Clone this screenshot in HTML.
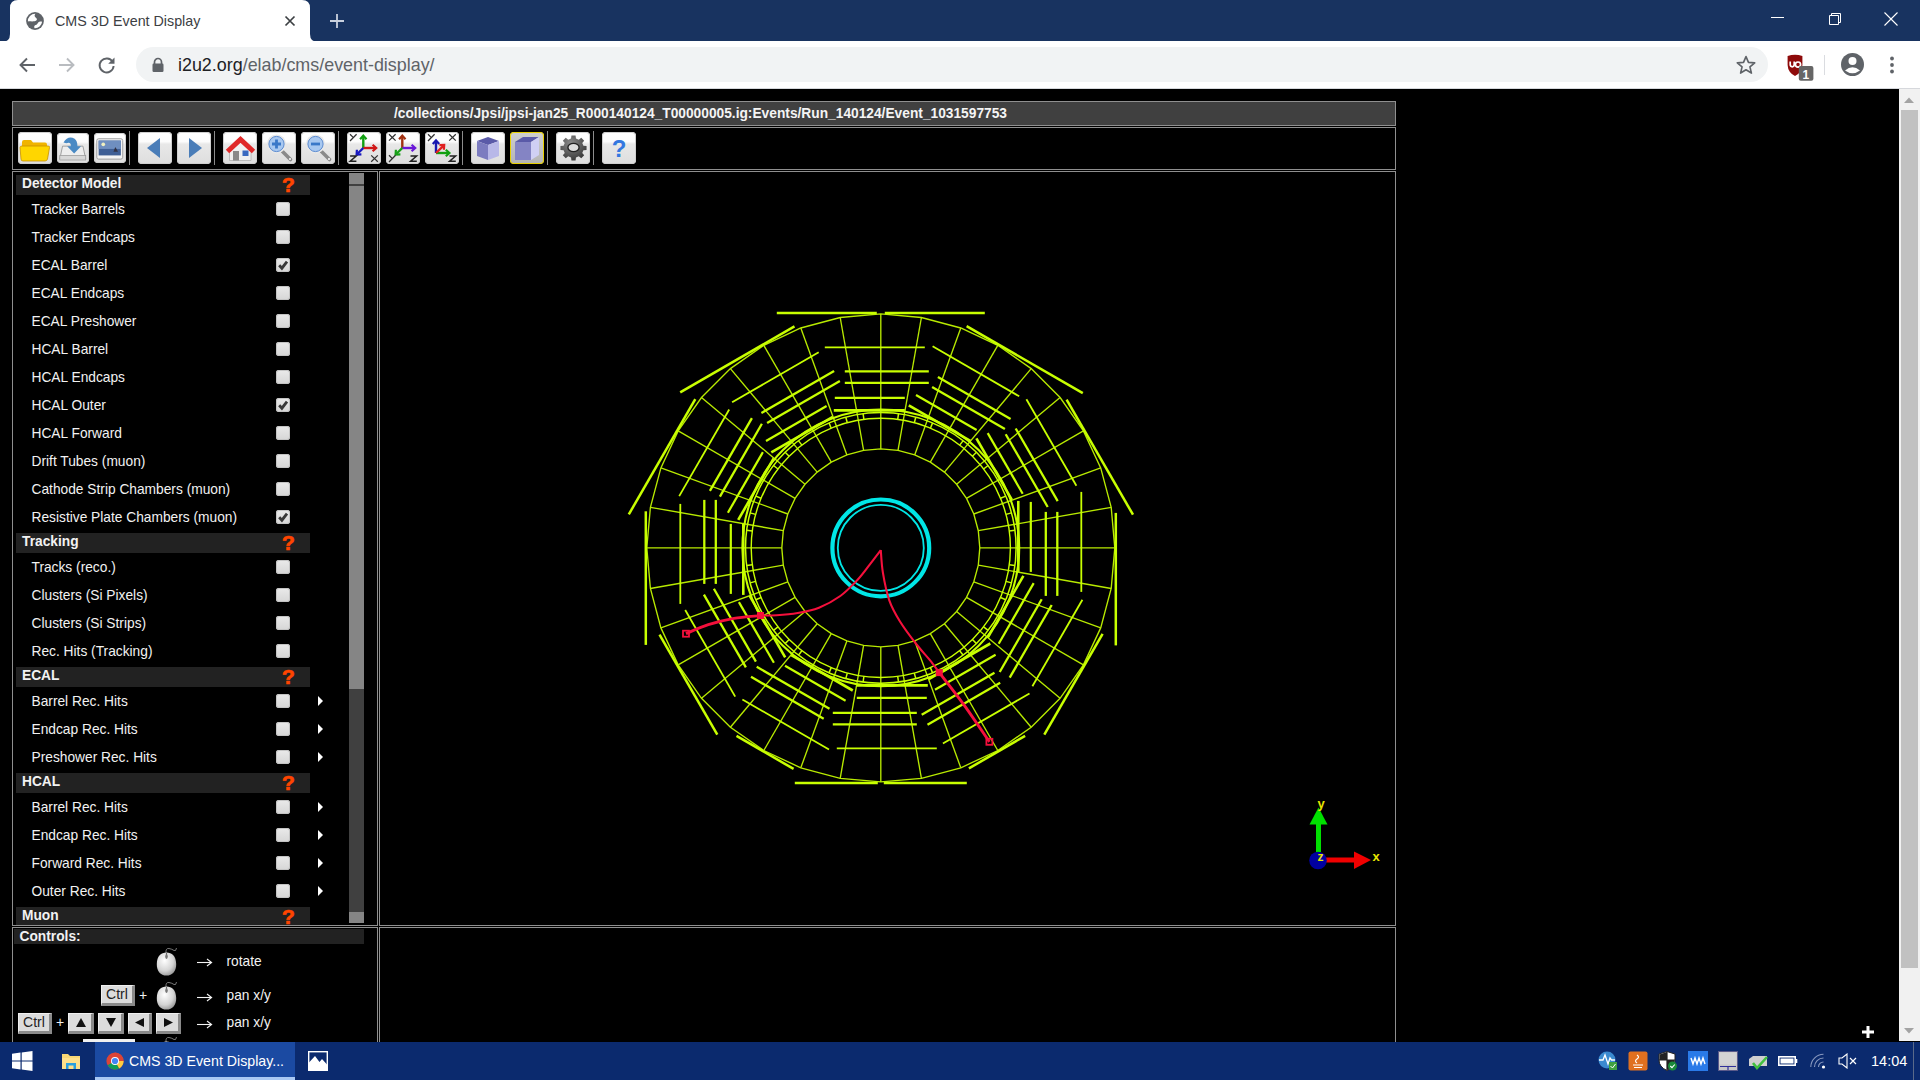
<!DOCTYPE html>
<html><head><meta charset="utf-8"><title>CMS 3D Event Display</title>
<style>
*{box-sizing:border-box}
body{margin:0;width:1920px;height:1080px;overflow:hidden;position:relative;background:#000;font-family:'Liberation Sans', sans-serif}
.a{position:absolute}
.btn{position:absolute;top:132px;width:34px;height:32px;border-radius:4px;background:linear-gradient(#ffffff 0%,#fcfcfc 30%,#e8e8e8 38%,#dedede 100%);box-shadow:inset 0 0 0 1px #cfcfcf}
.btn svg{position:absolute;left:0;top:0}
.sep{position:absolute;top:131px;width:1px;height:34px;background:#8c8c8c}
.hdr{position:absolute;left:16px;width:294px;height:20px;background:#222;color:#f2f2f2;font-weight:bold;font-size:13.75px;line-height:18px;padding-left:6px}
.hq{position:absolute;left:266px;top:-1px;text-align:left;color:#ff4500;font-weight:bold;font-size:21px;line-height:21px;-webkit-text-stroke:0.7px #ff4500}
.row{position:absolute;left:16px;width:330px;height:28px;color:#f2f2f2;font-size:13.75px;line-height:28px;padding-left:15.5px;padding-top:1px}
.cb{position:absolute;left:260px;top:7px;width:14px;height:14px;border-radius:3px;background:linear-gradient(#eaeaea,#d6d6d6);box-shadow:inset 0 0 0 1px #c4c4c4}
.tri{position:absolute;left:301.6px;top:9px;width:0;height:0;border-left:5.5px solid #fff;border-top:5px solid transparent;border-bottom:5px solid transparent}
.box{position:absolute;border:1px solid #8f8f8f}
.key{position:absolute;background:#dcdcdc;border-top:1px solid #f0f0f0;border-left:1px solid #f0f0f0;border-right:3px solid #8a8a8a;border-bottom:3px solid #8a8a8a;color:#222;font-size:14px;text-align:center}
</style></head><body>

<div class="a" style="left:0;top:0;width:1920px;height:41px;background:#183360"></div>
<svg class="a" style="left:0;top:0" width="330" height="42">
<path d="M2,42 Q10,42 10,34 L10,8 Q10,0 18,0 L302,0 Q310,0 310,8 L310,34 Q310,42 318,42 Z" fill="#ffffff"/>
</svg>
<svg class="a" style="left:26px;top:12px" width="18" height="18" viewBox="0 0 18 18">
<circle cx="9" cy="9" r="8.9" fill="#5f6368"/>
<path d="M1.9,9.4 A7.2,7.2 0 0 1 9.4,1.8 C8.4,3 8.2,4.6 9.6,5.4 C11,6.2 11.4,7.6 10.2,8.6 C8.6,9.8 5,9.2 1.9,9.4 Z" fill="#fff"/>
<path d="M16.1,9.8 A7.2,7.2 0 0 1 8.6,16.2 C7.8,15 8.2,13.6 9.6,13.1 C11,12.6 11.6,11.4 12.2,10.4 C13.2,9.2 14.8,9.2 16.1,9.8 Z" fill="#fff"/>
</svg>
<div class="a" style="left:55px;top:11px;font-size:14.3px;color:#3c4043;line-height:20px;white-space:nowrap">CMS 3D Event Display</div>
<svg class="a" style="left:283px;top:14px" width="14" height="14" viewBox="0 0 14 14"><path d="M2.5,2.5 L11.5,11.5 M11.5,2.5 L2.5,11.5" stroke="#3c4043" stroke-width="1.7"/></svg>
<svg class="a" style="left:329px;top:13px" width="16" height="16" viewBox="0 0 16 16"><path d="M8,1 V15 M1,8 H15" stroke="#c9d1de" stroke-width="1.8"/></svg>
<div class="a" style="left:1771px;top:17px;width:13px;height:1px;background:#fff"></div>
<svg class="a" style="left:1826px;top:11px" width="16" height="16" viewBox="0 0 16 16"><path d="M3.5,4.5 H12.5 V13.5 H3.5 Z M5.5,4.5 V2.5 H14.5 V11.5 H12.5" fill="none" stroke="#fff" stroke-width="1"/></svg>
<svg class="a" style="left:1883px;top:11px" width="16" height="16" viewBox="0 0 16 16"><path d="M1.5,1.5 L14.5,14.5 M14.5,1.5 L1.5,14.5" stroke="#fff" stroke-width="1.1"/></svg>

<div class="a" style="left:0;top:41px;width:1920px;height:47px;background:#fff"></div>
<div class="a" style="left:0;top:88px;width:1920px;height:1px;background:#d6d8dc"></div>
<svg class="a" style="left:17px;top:55px" width="20" height="20" viewBox="0 0 20 20"><path d="M18,10 H4 M10,3.5 L3.5,10 L10,16.5" fill="none" stroke="#5f6368" stroke-width="1.9"/></svg>
<svg class="a" style="left:57px;top:55px" width="20" height="20" viewBox="0 0 20 20"><path d="M2,10 H16 M10,3.5 L16.5,10 L10,16.5" fill="none" stroke="#b9bcc0" stroke-width="1.9"/></svg>
<svg class="a" style="left:97px;top:55px" width="20" height="20" viewBox="0 0 20 20"><path d="M15.6,6.8 A7,7 0 1 0 16.6,11" fill="none" stroke="#5f6368" stroke-width="1.9"/><path d="M17.5,2.5 V8.8 H11.2 Z" fill="#5f6368"/></svg>
<div class="a" style="left:136px;top:47px;width:1632px;height:35px;border-radius:17.5px;background:#f1f3f4"></div>
<svg class="a" style="left:151px;top:57px" width="14" height="16" viewBox="0 0 14 16"><path d="M3.5,7 V5 A3.5,3.5 0 0 1 10.5,5 V7" fill="none" stroke="#5f6368" stroke-width="1.7"/><rect x="1.5" y="6.5" width="11" height="8.5" rx="1.2" fill="#5f6368"/></svg>
<div class="a" style="left:178px;top:54px;font-size:17.9px;line-height:22px;color:#5f6368;white-space:nowrap"><span style="color:#202124">i2u2.org</span>/elab/cms/event-display/</div>
<svg class="a" style="left:1735px;top:54px" width="22" height="22" viewBox="0 0 24 24"><path d="M12,2.8 L14.7,9.2 L21.5,9.7 L16.3,14.1 L17.9,20.8 L12,17.2 L6.1,20.8 L7.7,14.1 L2.5,9.7 L9.3,9.2 Z" fill="none" stroke="#5f6368" stroke-width="1.8" stroke-linejoin="round"/></svg>
<svg class="a" style="left:1786px;top:53px" width="30" height="30" viewBox="0 0 30 30"><path d="M1.6,3 Q9,0.5 16.4,3 V12 Q16,19.5 9,23 Q2,19.5 1.6,12 Z" fill="#8e0a0a"/><path d="M4.2,8.4 V11.6 Q4.2,13.8 6.2,13.8 Q8.2,13.8 8.2,11.6 V8.4" fill="none" stroke="#fff" stroke-width="1.7"/><circle cx="12" cy="11.6" r="2.6" fill="none" stroke="#fff" stroke-width="1.7"/><rect x="12.8" y="13" width="14.6" height="14.8" rx="2" fill="#666"/><text x="16.6" y="25.6" font-family="Liberation Sans" font-weight="bold" font-size="12" fill="#fff">1</text></svg>
<div class="a" style="left:1824px;top:55px;width:1px;height:20px;background:#dadce0"></div>
<svg class="a" style="left:1840px;top:52px" width="25" height="25" viewBox="0 0 25 25"><circle cx="12.5" cy="12.5" r="11.5" fill="#5f6368"/><circle cx="12.5" cy="9" r="4" fill="#fff"/><path d="M5,18.5 Q12.5,12 20,18.5 Q12.5,24 5,18.5 Z" fill="#fff"/></svg>
<svg class="a" style="left:1888px;top:55px" width="8" height="20" viewBox="0 0 8 20"><circle cx="4" cy="3.5" r="1.9" fill="#5f6368"/><circle cx="4" cy="10" r="1.9" fill="#5f6368"/><circle cx="4" cy="16.5" r="1.9" fill="#5f6368"/></svg>

<div class="a" style="left:1899px;top:89px;width:21px;height:952px;background:#f1f1f1"></div>
<svg class="a" style="left:1903px;top:96px" width="12" height="8"><path d="M1,7 L6,1.5 L11,7 Z" fill="#a3a3a3"/></svg>
<div class="a" style="left:1901px;top:110px;width:17px;height:858px;background:#c1c1c1"></div>
<svg class="a" style="left:1903px;top:1027px" width="12" height="8"><path d="M1,1 L6,6.5 L11,1 Z" fill="#a3a3a3"/></svg>
<svg class="a" style="left:1861px;top:1025px" width="14" height="14"><path d="M7,1 V13 M1,7 H13" stroke="#fff" stroke-width="3"/></svg>

<div class="box" style="left:12px;top:101px;width:1384px;height:25px;background:#404040"></div>
<div class="a" style="left:12px;top:101px;width:1384px;height:25px;line-height:25px;text-align:center;color:#f4f4f4;font-weight:bold;font-size:13.75px;white-space:nowrap;padding-right:7px">/collections/Jpsi/jpsi-jan25_R000140124_T00000005.ig:Events/Run_140124/Event_1031597753</div>
<div class="box" style="left:12px;top:127px;width:1384px;height:43px"></div>
<div class="box" style="left:12px;top:171px;width:366px;height:755px"></div>
<div class="box" style="left:379px;top:171px;width:1017px;height:755px"></div>
<div class="box" style="left:12px;top:927px;width:366px;height:200px"></div>
<div class="box" style="left:379px;top:927px;width:1017px;height:200px"></div>

<div class="btn" style="left:18px"><svg width="34" height="32" viewBox="0 0 34 32"><path d="M4,10 Q4,8 6,8 H13 L15,10.5 H27 Q29,10.5 29,12.5 V16 H4 Z" fill="#f0b400"/><path d="M3,27 L2,15.5 Q2,14 4,14 H30 Q32,14 31.5,15.5 L29.5,27 Q29,29 27,29 H5 Q3,29 3,27 Z" fill="#ffd600" stroke="#c89000" stroke-width="0.8"/></svg></div>
<div class="btn" style="left:57px;top:133px;width:31.5px;height:30px"><svg width="31.5" height="30" viewBox="0 0 34 32"><path d="M6,14 H28 L31,28 H3 Z" fill="#eeeeee" stroke="#9a9a9a" stroke-width="1"/><rect x="3" y="24" width="28" height="5" fill="#d8d8d8" stroke="#9a9a9a" stroke-width="0.8"/><path d="M7,10 Q12,2 19,6 Q22,8 22,14 H26 L18.5,22 L11,14 H15 Q15,9 10,11 Z" fill="#4a8ac4"/></svg></div>
<div class="btn" style="left:94px;top:133px;width:31.5px;height:30px"><svg width="31.5" height="30" viewBox="0 0 34 32"><rect x="3" y="6" width="28" height="22" rx="2" fill="#f4f4f4" stroke="#9a9a9a"/><rect x="5" y="8" width="24" height="16" fill="#3f5f95"/><rect x="5" y="8" width="24" height="9" fill="#6f8fc0"/><circle cx="10" cy="12" r="2" fill="#f0f0c0"/><path d="M21,20 L23,15 L26,20 Z" fill="#334"/></svg></div>
<div class="btn" style="left:138px"><svg width="34" height="32" viewBox="0 0 34 32"><path d="M9,16 L22,6 V26 Z" fill="#4a7db8"/></svg></div>
<div class="btn" style="left:177px"><svg width="34" height="32" viewBox="0 0 34 32"><path d="M25,16 L12,6 V26 Z" fill="#4a7db8"/></svg></div>
<div class="btn" style="left:223px"><svg width="34" height="32" viewBox="0 0 34 32"><path d="M6.5,17 V28.5 H28 V17 L17.5,8 Z" fill="#f0f0f0" stroke="#b0b0b0" stroke-width="0.8"/><rect x="10" y="19" width="6" height="9.5" fill="#8a8a8a"/><rect x="19.5" y="18.5" width="6" height="5.5" fill="#3a6ac0"/><path d="M4.5,19.5 L17.5,7.5 L30.5,19.5" fill="none" stroke="#e02828" stroke-width="5" stroke-linejoin="miter"/></svg></div>
<div class="btn" style="left:262px"><svg width="34" height="32" viewBox="0 0 34 32"><path d="M20,19 L28.5,27.5" stroke="#8a8a8a" stroke-width="3.6" stroke-linecap="round"/><circle cx="28" cy="27" r="1" fill="#fff"/><circle cx="14.5" cy="12" r="9.6" fill="#e8e8e8"/><circle cx="14.5" cy="12" r="7.6" fill="#a8c8f0" stroke="#5a8ad0" stroke-width="1"/><path d="M14.5,7.5 V16.5 M10,12 H19" stroke="#3a78c8" stroke-width="2.8"/></svg></div>
<div class="btn" style="left:301px"><svg width="34" height="32" viewBox="0 0 34 32"><path d="M20,19 L28.5,27.5" stroke="#8a8a8a" stroke-width="3.6" stroke-linecap="round"/><circle cx="28" cy="27" r="1" fill="#fff"/><circle cx="14.5" cy="12" r="9.6" fill="#e8e8e8"/><circle cx="14.5" cy="12" r="7.6" fill="#a8c8f0" stroke="#5a8ad0" stroke-width="1"/><path d="M10,12 H19" stroke="#3a78c8" stroke-width="2.8"/></svg></div>
<div class="btn" style="left:347px"><svg width="34" height="32" viewBox="0 0 34 32"><path d="M16.3,16.0 L16.3,4.4" stroke="#10a010" stroke-width="2.4" fill="none"/><path d="M19.5,7.2 L16.3,3.6 L13.1,7.2" stroke="#10a010" stroke-width="2.2" fill="none" stroke-linejoin="miter"/><path d="M16.3,16.0 L28.4,16.0" stroke="#d01818" stroke-width="2.4" fill="none"/><path d="M25.6,19.2 L29.2,16.0 L25.6,12.8" stroke="#d01818" stroke-width="2.2" fill="none" stroke-linejoin="miter"/><path d="M16.3,16.0 L10.2,22.0" stroke="#1818c0" stroke-width="2.4" fill="none"/><path d="M9.9,17.8 L9.6,22.6 L14.4,22.4" stroke="#1818c0" stroke-width="2.2" fill="none" stroke-linejoin="miter"/><path d="M3,2.2 L6.4,5.6 M9.6,2.2 L3,9.0" stroke="#303030" stroke-width="1.25" fill="none"/><path d="M3.0999999999999996,24.0 H9.2 L3.1999999999999997,29.2 H9.399999999999999" stroke="#202020" stroke-width="1.5" fill="none"/><path d="M24.2,23.4 L30.799999999999997,29.799999999999997 M30.799999999999997,23.4 L24.2,29.799999999999997" stroke="#303030" stroke-width="1.25" fill="none"/></svg></div>
<div class="btn" style="left:386px"><svg width="34" height="32" viewBox="0 0 34 32"><path d="M16.3,16.0 L16.3,4.4" stroke="#a03010" stroke-width="2.4" fill="none"/><path d="M19.5,7.2 L16.3,3.6 L13.1,7.2" stroke="#a03010" stroke-width="2.2" fill="none" stroke-linejoin="miter"/><path d="M16.3,16.0 L28.4,16.0" stroke="#6a18d8" stroke-width="2.4" fill="none"/><path d="M25.6,19.2 L29.2,16.0 L25.6,12.8" stroke="#6a18d8" stroke-width="2.2" fill="none" stroke-linejoin="miter"/><path d="M16.3,16.0 L10.2,22.0" stroke="#18a018" stroke-width="2.4" fill="none"/><path d="M9.9,17.8 L9.6,22.6 L14.4,22.4" stroke="#18a018" stroke-width="2.2" fill="none" stroke-linejoin="miter"/><path d="M3,2.2 L9.6,8.600000000000001 M9.6,2.2 L3,8.600000000000001" stroke="#303030" stroke-width="1.25" fill="none"/><path d="M3,23.2 L6.4,26.599999999999998 M9.6,23.2 L3,30.0" stroke="#303030" stroke-width="1.25" fill="none"/><path d="M24.5,24.0 H30.6 L24.599999999999998,29.2 H30.799999999999997" stroke="#202020" stroke-width="1.5" fill="none"/></svg></div>
<div class="btn" style="left:425px"><svg width="34" height="32" viewBox="0 0 34 32"><path d="M11.0,21.0 L11.0,9.2" stroke="#1818b0" stroke-width="2.4" fill="none"/><path d="M14.2,12.0 L11.0,8.4 L7.8,12.0" stroke="#1818b0" stroke-width="2.2" fill="none" stroke-linejoin="miter"/><path d="M11.0,21.0 L23.6,21.0" stroke="#10a010" stroke-width="2.4" fill="none"/><path d="M20.8,24.2 L24.4,21.0 L20.8,17.8" stroke="#10a010" stroke-width="2.2" fill="none" stroke-linejoin="miter"/><path d="M11.0,21.0 L18.6,13.6" stroke="#e02020" stroke-width="2.4" fill="none"/><path d="M18.9,17.8 L19.2,13.0 L14.4,13.2" stroke="#e02020" stroke-width="2.2" fill="none" stroke-linejoin="miter"/><path d="M3,2.2 L6.4,5.6 M9.6,2.2 L3,9.0" stroke="#303030" stroke-width="1.25" fill="none"/><path d="M24.2,2.2 L30.799999999999997,8.600000000000001 M30.799999999999997,2.2 L24.2,8.600000000000001" stroke="#303030" stroke-width="1.25" fill="none"/><path d="M24.5,24.0 H30.6 L24.599999999999998,29.2 H30.799999999999997" stroke="#202020" stroke-width="1.5" fill="none"/></svg></div>
<div class="btn" style="left:471px"><svg width="34" height="32" viewBox="0 0 34 32"><path d="M6,9 L17,5 L28,9 L17,13 Z" fill="#5a5aa8"/><path d="M6,9 L17,13 V28 L6,24 Z" fill="#7c7cc0"/><path d="M17,13 L28,9 V24 L17,28 Z" fill="#b8b8e8"/></svg></div>
<div class="btn" style="left:510px;background:linear-gradient(#cfcfcf,#b4b4b4);box-shadow:inset 0 0 0 1px #e8d000"><svg width="34" height="32" viewBox="0 0 34 32"><path d="M5,10 L13,5 H29 L21,10 Z" fill="#5a5aa8"/><path d="M5,10 H21 V28 H5 Z" fill="#8484c4"/><path d="M21,10 L29,5 V23 L21,28 Z" fill="#d0d0f4"/></svg></div>
<div class="btn" style="left:556px"><svg width="34" height="32" viewBox="0 0 34 32"><g transform="translate(17.5,16) scale(1,0.95)"><defs><radialGradient id="gg" cx="0.4" cy="0.3" r="0.8"><stop offset="0" stop-color="#8a8a8a"/><stop offset="1" stop-color="#303030"/></radialGradient></defs><path d="M9.90,-2.47 L13.04,-2.06 L13.04,2.06 L9.90,2.47 L8.74,5.25 L10.68,7.76 L7.76,10.68 L5.25,8.74 L2.47,9.90 L2.06,13.04 L-2.06,13.04 L-2.47,9.90 L-5.25,8.74 L-7.76,10.68 L-10.68,7.76 L-8.74,5.25 L-9.90,2.47 L-13.04,2.06 L-13.04,-2.06 L-9.90,-2.47 L-8.74,-5.25 L-10.68,-7.76 L-7.76,-10.68 L-5.25,-8.74 L-2.47,-9.90 L-2.06,-13.04 L2.06,-13.04 L2.47,-9.90 L5.25,-8.74 L7.76,-10.68 L10.68,-7.76 L8.74,-5.25 Z" fill="url(#gg)"/><ellipse cx="0" cy="-0.5" rx="5.6" ry="4.4" fill="#dcdcdc" stroke="#222" stroke-width="1.4"/></g></svg></div>
<div class="btn" style="left:602px"><svg width="34" height="32" viewBox="0 0 34 32"><text x="17" y="25" text-anchor="middle" font-family="Liberation Sans" font-weight="bold" font-size="24" fill="#3478e0">?</text></svg></div>
<div class="sep" style="left:129px"></div>
<div class="sep" style="left:214px"></div>
<div class="sep" style="left:338px"></div>
<div class="sep" style="left:462px"></div>
<div class="sep" style="left:547px"></div>
<div class="sep" style="left:593px"></div>
<div class="a" style="left:13px;top:172px;width:364px;height:753px;overflow:hidden">
<div class="hdr" style="left:3px;top:3px">Detector Model<div class="hq">?</div></div>
<div class="row" style="left:3px;top:23px">Tracker Barrels<div class="cb"></div></div>
<div class="row" style="left:3px;top:51px">Tracker Endcaps<div class="cb"></div></div>
<div class="row" style="left:3px;top:79px">ECAL Barrel<div class="cb"><svg width="14" height="14" style="position:absolute;left:0;top:0"><path d="M3.2,7.2 L5.9,10.2 L11,3.6" fill="none" stroke="#383838" stroke-width="2.8"/></svg></div></div>
<div class="row" style="left:3px;top:107px">ECAL Endcaps<div class="cb"></div></div>
<div class="row" style="left:3px;top:135px">ECAL Preshower<div class="cb"></div></div>
<div class="row" style="left:3px;top:163px">HCAL Barrel<div class="cb"></div></div>
<div class="row" style="left:3px;top:191px">HCAL Endcaps<div class="cb"></div></div>
<div class="row" style="left:3px;top:219px">HCAL Outer<div class="cb"><svg width="14" height="14" style="position:absolute;left:0;top:0"><path d="M3.2,7.2 L5.9,10.2 L11,3.6" fill="none" stroke="#383838" stroke-width="2.8"/></svg></div></div>
<div class="row" style="left:3px;top:247px">HCAL Forward<div class="cb"></div></div>
<div class="row" style="left:3px;top:275px">Drift Tubes (muon)<div class="cb"></div></div>
<div class="row" style="left:3px;top:303px">Cathode Strip Chambers (muon)<div class="cb"></div></div>
<div class="row" style="left:3px;top:331px">Resistive Plate Chambers (muon)<div class="cb"><svg width="14" height="14" style="position:absolute;left:0;top:0"><path d="M3.2,7.2 L5.9,10.2 L11,3.6" fill="none" stroke="#383838" stroke-width="2.8"/></svg></div></div>
<div class="hdr" style="left:3px;top:361px">Tracking<div class="hq">?</div></div>
<div class="row" style="left:3px;top:381px">Tracks (reco.)<div class="cb"></div></div>
<div class="row" style="left:3px;top:409px">Clusters (Si Pixels)<div class="cb"></div></div>
<div class="row" style="left:3px;top:437px">Clusters (Si Strips)<div class="cb"></div></div>
<div class="row" style="left:3px;top:465px">Rec. Hits (Tracking)<div class="cb"></div></div>
<div class="hdr" style="left:3px;top:495px">ECAL<div class="hq">?</div></div>
<div class="row" style="left:3px;top:515px">Barrel Rec. Hits<div class="cb"></div><div class="tri"></div></div>
<div class="row" style="left:3px;top:543px">Endcap Rec. Hits<div class="cb"></div><div class="tri"></div></div>
<div class="row" style="left:3px;top:571px">Preshower Rec. Hits<div class="cb"></div><div class="tri"></div></div>
<div class="hdr" style="left:3px;top:601px">HCAL<div class="hq">?</div></div>
<div class="row" style="left:3px;top:621px">Barrel Rec. Hits<div class="cb"></div><div class="tri"></div></div>
<div class="row" style="left:3px;top:649px">Endcap Rec. Hits<div class="cb"></div><div class="tri"></div></div>
<div class="row" style="left:3px;top:677px">Forward Rec. Hits<div class="cb"></div><div class="tri"></div></div>
<div class="row" style="left:3px;top:705px">Outer Rec. Hits<div class="cb"></div><div class="tri"></div></div>
<div class="hdr" style="left:3px;top:735px">Muon<div class="hq">?</div></div>
</div>
<div class="a" style="left:349px;top:173px;width:15px;height:750px;background:#404040"></div>
<div class="a" style="left:349px;top:173px;width:15px;height:11px;background:#858585"></div>
<div class="a" style="left:349px;top:186px;width:15px;height:503px;background:#858585"></div>
<div class="a" style="left:349px;top:912px;width:15px;height:11px;background:#858585"></div>

<div class="a" style="left:14px;top:929px;width:350px;height:15px;background:#222"></div>
<div class="a" style="left:19.5px;top:927px;color:#f2f2f2;font-weight:bold;font-size:13.75px;line-height:19px">Controls:</div>

<svg width="0" height="0" style="position:absolute"><defs><radialGradient id="mg" cx="0.4" cy="0.35" r="0.75"><stop offset="0" stop-color="#ffffff"/><stop offset="0.6" stop-color="#d4d4d4"/><stop offset="1" stop-color="#8a8a8a"/></radialGradient></defs></svg>
<svg class="a" style="left:155px;top:947px" width="26" height="30" viewBox="0 0 26 30"><path d="M11,6 Q10.5,1 14,1.5 Q17,2 19,3.5 Q21,4.5 21.5,1" fill="none" stroke="#aaa" stroke-width="0.7"/><path d="M11.5,5.5 C6,5.5 2,9 1.8,17 C1.6,24 5.5,28.6 11.5,28.6 C17.5,28.6 21.4,24 21.2,17 C21,9 17,5.5 11.5,5.5 Z" fill="url(#mg)"/><path d="M11.5,6 V11.5" stroke="#666" stroke-width="1.1"/><ellipse cx="11.5" cy="9.5" rx="1.3" ry="2.2" fill="#777"/></svg>
<svg class="a" style="left:155px;top:981px" width="26" height="30" viewBox="0 0 26 30"><path d="M11,6 Q10.5,1 14,1.5 Q17,2 19,3.5 Q21,4.5 21.5,1" fill="none" stroke="#aaa" stroke-width="0.7"/><path d="M11.5,5.5 C6,5.5 2,9 1.8,17 C1.6,24 5.5,28.6 11.5,28.6 C17.5,28.6 21.4,24 21.2,17 C21,9 17,5.5 11.5,5.5 Z" fill="url(#mg)"/><path d="M11.5,6 V11.5" stroke="#666" stroke-width="1.1"/><ellipse cx="11.5" cy="9.5" rx="1.3" ry="2.2" fill="#777"/></svg>
<svg class="a" style="left:155px;top:1036px" width="26" height="30" viewBox="0 0 26 30"><path d="M11,6 Q10.5,1 14,1.5 Q17,2 19,3.5 Q21,4.5 21.5,1" fill="none" stroke="#aaa" stroke-width="0.7"/><path d="M11.5,5.5 C6,5.5 2,9 1.8,17 C1.6,24 5.5,28.6 11.5,28.6 C17.5,28.6 21.4,24 21.2,17 C21,9 17,5.5 11.5,5.5 Z" fill="url(#mg)"/><path d="M11.5,6 V11.5" stroke="#666" stroke-width="1.1"/><ellipse cx="11.5" cy="9.5" rx="1.3" ry="2.2" fill="#777"/></svg>
<svg class="a" style="left:196px;top:957px" width="18" height="10" viewBox="0 0 18 10"><path d="M1,5.5 H15.5" stroke="#f4f4f4" stroke-width="1.1"/><path d="M11,2 L15.6,5.5 L11,9" fill="none" stroke="#f4f4f4" stroke-width="1.1"/></svg>
<div class="a" style="left:226.5px;top:952px;color:#f2f2f2;font-size:13.75px;line-height:20px">rotate</div>
<div class="key" style="left:101px;top:985px;width:34px;height:21px;line-height:17px">Ctrl</div>
<div class="a" style="left:139px;top:985px;color:#f2f2f2;font-size:14px;line-height:20px">+</div>
<svg class="a" style="left:196px;top:992px" width="18" height="10" viewBox="0 0 18 10"><path d="M1,5.5 H15.5" stroke="#f4f4f4" stroke-width="1.1"/><path d="M11,2 L15.6,5.5 L11,9" fill="none" stroke="#f4f4f4" stroke-width="1.1"/></svg>
<div class="a" style="left:226.5px;top:986px;color:#f2f2f2;font-size:13.75px;line-height:20px">pan x/y</div>
<div class="key" style="left:18px;top:1013px;width:34px;height:21px;line-height:17px">Ctrl</div>
<div class="a" style="left:56px;top:1012px;color:#f2f2f2;font-size:14px;line-height:20px">+</div>
<div class="key" style="left:68px;top:1013px;width:26px;height:21px"><svg width="20" height="17" style="position:absolute;left:2px;top:0"><path d="M5,13 L10,4 L15,13 Z" fill="#111"/></svg></div>
<div class="key" style="left:98px;top:1013px;width:26px;height:21px"><svg width="20" height="17" style="position:absolute;left:2px;top:0"><path d="M5,4 L10,13 L15,4 Z" fill="#111"/></svg></div>
<div class="key" style="left:127.5px;top:1013px;width:24px;height:21px"><svg width="20" height="17" style="position:absolute;left:1px;top:0"><path d="M14,4 L5,8.5 L14,13 Z" fill="#111"/></svg></div>
<div class="key" style="left:156px;top:1013px;width:25px;height:21px"><svg width="20" height="17" style="position:absolute;left:2px;top:0"><path d="M5,4 L14,8.5 L5,13 Z" fill="#111"/></svg></div>
<svg class="a" style="left:196px;top:1019px" width="18" height="10" viewBox="0 0 18 10"><path d="M1,5.5 H15.5" stroke="#f4f4f4" stroke-width="1.1"/><path d="M11,2 L15.6,5.5 L11,9" fill="none" stroke="#f4f4f4" stroke-width="1.1"/></svg>
<div class="a" style="left:226.5px;top:1013px;color:#f2f2f2;font-size:13.75px;line-height:20px">pan x/y</div>
<div class="a" style="left:83px;top:1039px;width:52px;height:4px;background:#f0f0f0"></div>

<svg class="a" style="left:0;top:0" width="1920" height="1080" viewBox="0 0 1920 1080">
<line x1="979.8" y1="547.9" x2="1114.8" y2="547.9" stroke="#b8ea00" stroke-width="1.35"/>
<line x1="978.3" y1="530.7" x2="1111.2" y2="507.3" stroke="#b8ea00" stroke-width="1.35"/>
<line x1="973.8" y1="514.0" x2="1100.7" y2="467.9" stroke="#b8ea00" stroke-width="1.35"/>
<line x1="966.5" y1="498.4" x2="1083.4" y2="430.9" stroke="#b8ea00" stroke-width="1.35"/>
<line x1="956.6" y1="484.3" x2="1060.1" y2="397.5" stroke="#b8ea00" stroke-width="1.35"/>
<line x1="944.4" y1="472.1" x2="1031.2" y2="368.6" stroke="#b8ea00" stroke-width="1.35"/>
<line x1="930.3" y1="462.2" x2="997.8" y2="345.3" stroke="#b8ea00" stroke-width="1.35"/>
<line x1="914.7" y1="454.9" x2="960.8" y2="328.0" stroke="#b8ea00" stroke-width="1.35"/>
<line x1="898.0" y1="450.4" x2="921.4" y2="317.5" stroke="#b8ea00" stroke-width="1.35"/>
<line x1="880.8" y1="448.9" x2="880.8" y2="313.9" stroke="#b8ea00" stroke-width="1.35"/>
<line x1="863.6" y1="450.4" x2="840.2" y2="317.5" stroke="#b8ea00" stroke-width="1.35"/>
<line x1="846.9" y1="454.9" x2="800.8" y2="328.0" stroke="#b8ea00" stroke-width="1.35"/>
<line x1="831.3" y1="462.2" x2="763.8" y2="345.3" stroke="#b8ea00" stroke-width="1.35"/>
<line x1="817.2" y1="472.1" x2="730.4" y2="368.6" stroke="#b8ea00" stroke-width="1.35"/>
<line x1="805.0" y1="484.3" x2="701.5" y2="397.5" stroke="#b8ea00" stroke-width="1.35"/>
<line x1="795.1" y1="498.4" x2="678.2" y2="430.9" stroke="#b8ea00" stroke-width="1.35"/>
<line x1="787.8" y1="514.0" x2="660.9" y2="467.9" stroke="#b8ea00" stroke-width="1.35"/>
<line x1="783.3" y1="530.7" x2="650.4" y2="507.3" stroke="#b8ea00" stroke-width="1.35"/>
<line x1="781.8" y1="547.9" x2="646.8" y2="547.9" stroke="#b8ea00" stroke-width="1.35"/>
<line x1="783.3" y1="565.1" x2="650.4" y2="588.5" stroke="#b8ea00" stroke-width="1.35"/>
<line x1="787.8" y1="581.8" x2="660.9" y2="627.9" stroke="#b8ea00" stroke-width="1.35"/>
<line x1="795.1" y1="597.4" x2="678.2" y2="664.9" stroke="#b8ea00" stroke-width="1.35"/>
<line x1="805.0" y1="611.5" x2="701.5" y2="698.3" stroke="#b8ea00" stroke-width="1.35"/>
<line x1="817.2" y1="623.7" x2="730.4" y2="727.2" stroke="#b8ea00" stroke-width="1.35"/>
<line x1="831.3" y1="633.6" x2="763.8" y2="750.5" stroke="#b8ea00" stroke-width="1.35"/>
<line x1="846.9" y1="640.9" x2="800.8" y2="767.8" stroke="#b8ea00" stroke-width="1.35"/>
<line x1="863.6" y1="645.4" x2="840.2" y2="778.3" stroke="#b8ea00" stroke-width="1.35"/>
<line x1="880.8" y1="646.9" x2="880.8" y2="781.9" stroke="#b8ea00" stroke-width="1.35"/>
<line x1="898.0" y1="645.4" x2="921.4" y2="778.3" stroke="#b8ea00" stroke-width="1.35"/>
<line x1="914.7" y1="640.9" x2="960.8" y2="767.8" stroke="#b8ea00" stroke-width="1.35"/>
<line x1="930.3" y1="633.6" x2="997.8" y2="750.5" stroke="#b8ea00" stroke-width="1.35"/>
<line x1="944.4" y1="623.7" x2="1031.2" y2="727.2" stroke="#b8ea00" stroke-width="1.35"/>
<line x1="956.6" y1="611.5" x2="1060.1" y2="698.3" stroke="#b8ea00" stroke-width="1.35"/>
<line x1="966.5" y1="597.4" x2="1083.4" y2="664.9" stroke="#b8ea00" stroke-width="1.35"/>
<line x1="973.8" y1="581.8" x2="1100.7" y2="627.9" stroke="#b8ea00" stroke-width="1.35"/>
<line x1="978.3" y1="565.1" x2="1111.2" y2="588.5" stroke="#b8ea00" stroke-width="1.35"/>
<polygon points="979.8,547.9 978.3,530.7 973.8,514.0 966.5,498.4 956.6,484.3 944.4,472.1 930.3,462.2 914.7,454.9 898.0,450.4 880.8,448.9 863.6,450.4 846.9,454.9 831.3,462.2 817.2,472.1 805.0,484.3 795.1,498.4 787.8,514.0 783.3,530.7 781.8,547.9 783.3,565.1 787.8,581.8 795.1,597.4 805.0,611.5 817.2,623.7 831.3,633.6 846.9,640.9 863.6,645.4 880.8,646.9 898.0,645.4 914.7,640.9 930.3,633.6 944.4,623.7 956.6,611.5 966.5,597.4 973.8,581.8 978.3,565.1" fill="none" stroke="#b8ea00" stroke-width="1.35"/>
<polygon points="1114.8,547.9 1111.2,507.3 1100.7,467.9 1083.4,430.9 1060.1,397.5 1031.2,368.6 997.8,345.3 960.8,328.0 921.4,317.5 880.8,313.9 840.2,317.5 800.8,328.0 763.8,345.3 730.4,368.6 701.5,397.5 678.2,430.9 660.9,467.9 650.4,507.3 646.8,547.9 650.4,588.5 660.9,627.9 678.2,664.9 701.5,698.3 730.4,727.2 763.8,750.5 800.8,767.8 840.2,778.3 880.8,781.9 921.4,778.3 960.8,767.8 997.8,750.5 1031.2,727.2 1060.1,698.3 1083.4,664.9 1100.7,627.9 1111.2,588.5" fill="none" stroke="#b8ea00" stroke-width="1.35"/>
<circle cx="880.8" cy="547.9" r="129.6" fill="none" stroke="#c8ff00" stroke-width="1.4"/>
<circle cx="880.8" cy="547.9" r="135.3" fill="none" stroke="#c8ff00" stroke-width="1.5"/>
<circle cx="880.8" cy="547.9" r="138.4" fill="none" stroke="#c8ff00" stroke-width="2.1"/>
<line x1="1009.3" y1="531.0" x2="1014.9" y2="530.2" stroke="#c8ff00" stroke-width="1.5"/>
<line x1="1006.0" y1="514.4" x2="1011.5" y2="512.9" stroke="#c8ff00" stroke-width="1.5"/>
<line x1="1000.5" y1="498.3" x2="1005.8" y2="496.1" stroke="#c8ff00" stroke-width="1.5"/>
<line x1="983.6" y1="469.0" x2="988.1" y2="465.5" stroke="#c8ff00" stroke-width="1.5"/>
<line x1="972.4" y1="456.3" x2="976.5" y2="452.2" stroke="#c8ff00" stroke-width="1.5"/>
<line x1="959.7" y1="445.1" x2="963.2" y2="440.6" stroke="#c8ff00" stroke-width="1.5"/>
<line x1="930.4" y1="428.2" x2="932.6" y2="422.9" stroke="#c8ff00" stroke-width="1.5"/>
<line x1="914.3" y1="422.7" x2="915.8" y2="417.2" stroke="#c8ff00" stroke-width="1.5"/>
<line x1="897.7" y1="419.4" x2="898.5" y2="413.8" stroke="#c8ff00" stroke-width="1.5"/>
<line x1="863.9" y1="419.4" x2="863.1" y2="413.8" stroke="#c8ff00" stroke-width="1.5"/>
<line x1="847.3" y1="422.7" x2="845.8" y2="417.2" stroke="#c8ff00" stroke-width="1.5"/>
<line x1="831.2" y1="428.2" x2="829.0" y2="422.9" stroke="#c8ff00" stroke-width="1.5"/>
<line x1="801.9" y1="445.1" x2="798.4" y2="440.6" stroke="#c8ff00" stroke-width="1.5"/>
<line x1="789.2" y1="456.3" x2="785.1" y2="452.2" stroke="#c8ff00" stroke-width="1.5"/>
<line x1="778.0" y1="469.0" x2="773.5" y2="465.5" stroke="#c8ff00" stroke-width="1.5"/>
<line x1="761.1" y1="498.3" x2="755.8" y2="496.1" stroke="#c8ff00" stroke-width="1.5"/>
<line x1="755.6" y1="514.4" x2="750.1" y2="512.9" stroke="#c8ff00" stroke-width="1.5"/>
<line x1="752.3" y1="531.0" x2="746.7" y2="530.2" stroke="#c8ff00" stroke-width="1.5"/>
<line x1="752.3" y1="564.8" x2="746.7" y2="565.6" stroke="#c8ff00" stroke-width="1.5"/>
<line x1="755.6" y1="581.4" x2="750.1" y2="582.9" stroke="#c8ff00" stroke-width="1.5"/>
<line x1="761.1" y1="597.5" x2="755.8" y2="599.7" stroke="#c8ff00" stroke-width="1.5"/>
<line x1="778.0" y1="626.8" x2="773.5" y2="630.3" stroke="#c8ff00" stroke-width="1.5"/>
<line x1="789.2" y1="639.5" x2="785.1" y2="643.6" stroke="#c8ff00" stroke-width="1.5"/>
<line x1="801.9" y1="650.7" x2="798.4" y2="655.2" stroke="#c8ff00" stroke-width="1.5"/>
<line x1="831.2" y1="667.6" x2="829.0" y2="672.9" stroke="#c8ff00" stroke-width="1.5"/>
<line x1="847.3" y1="673.1" x2="845.8" y2="678.6" stroke="#c8ff00" stroke-width="1.5"/>
<line x1="863.9" y1="676.4" x2="863.1" y2="682.0" stroke="#c8ff00" stroke-width="1.5"/>
<line x1="897.7" y1="676.4" x2="898.5" y2="682.0" stroke="#c8ff00" stroke-width="1.5"/>
<line x1="914.3" y1="673.1" x2="915.8" y2="678.6" stroke="#c8ff00" stroke-width="1.5"/>
<line x1="930.4" y1="667.6" x2="932.6" y2="672.9" stroke="#c8ff00" stroke-width="1.5"/>
<line x1="959.7" y1="650.7" x2="963.2" y2="655.2" stroke="#c8ff00" stroke-width="1.5"/>
<line x1="972.4" y1="639.5" x2="976.5" y2="643.6" stroke="#c8ff00" stroke-width="1.5"/>
<line x1="983.6" y1="626.8" x2="988.1" y2="630.3" stroke="#c8ff00" stroke-width="1.5"/>
<line x1="1000.5" y1="597.5" x2="1005.8" y2="599.7" stroke="#c8ff00" stroke-width="1.5"/>
<line x1="1006.0" y1="581.4" x2="1011.5" y2="582.9" stroke="#c8ff00" stroke-width="1.5"/>
<line x1="1009.3" y1="564.8" x2="1014.9" y2="565.6" stroke="#c8ff00" stroke-width="1.5"/>
<line x1="1081.3" y1="491.9" x2="1081.3" y2="591.9" stroke="#c8ff00" stroke-width="1.8"/>
<line x1="1057.3" y1="511.9" x2="1057.3" y2="595.9" stroke="#c8ff00" stroke-width="2.3"/>
<line x1="1045.8" y1="511.9" x2="1045.8" y2="595.9" stroke="#c8ff00" stroke-width="2.3"/>
<line x1="1030.8" y1="501.9" x2="1030.8" y2="571.9" stroke="#c8ff00" stroke-width="2.2"/>
<line x1="1018.3" y1="500.9" x2="1018.3" y2="571.9" stroke="#c8ff00" stroke-width="2.6"/>
<line x1="1115.8" y1="512.9" x2="1115.8" y2="645.4" stroke="#c8ff00" stroke-width="2.5"/>
<line x1="1026.4" y1="399.2" x2="1076.4" y2="485.8" stroke="#c8ff00" stroke-width="1.8"/>
<line x1="1015.7" y1="428.5" x2="1057.7" y2="501.2" stroke="#c8ff00" stroke-width="2.3"/>
<line x1="1005.7" y1="434.2" x2="1047.7" y2="507.0" stroke="#c8ff00" stroke-width="2.3"/>
<line x1="987.7" y1="433.1" x2="1022.7" y2="493.7" stroke="#c8ff00" stroke-width="2.2"/>
<line x1="976.4" y1="438.4" x2="1011.9" y2="499.9" stroke="#c8ff00" stroke-width="2.6"/>
<line x1="1066.6" y1="399.7" x2="1133.0" y2="514.7" stroke="#c8ff00" stroke-width="2.5"/>
<line x1="932.6" y1="346.3" x2="1019.2" y2="396.3" stroke="#c8ff00" stroke-width="1.8"/>
<line x1="937.9" y1="377.0" x2="1010.6" y2="419.0" stroke="#c8ff00" stroke-width="2.3"/>
<line x1="932.1" y1="387.0" x2="1004.9" y2="429.0" stroke="#c8ff00" stroke-width="2.3"/>
<line x1="916.0" y1="395.0" x2="976.6" y2="430.0" stroke="#c8ff00" stroke-width="2.2"/>
<line x1="908.8" y1="405.3" x2="970.3" y2="440.8" stroke="#c8ff00" stroke-width="2.6"/>
<line x1="966.6" y1="326.1" x2="1082.8" y2="393.2" stroke="#c8ff00" stroke-width="2.5"/>
<line x1="824.8" y1="347.4" x2="924.8" y2="347.4" stroke="#c8ff00" stroke-width="1.8"/>
<line x1="844.8" y1="371.4" x2="928.8" y2="371.4" stroke="#c8ff00" stroke-width="2.3"/>
<line x1="844.8" y1="382.9" x2="928.8" y2="382.9" stroke="#c8ff00" stroke-width="2.3"/>
<line x1="834.8" y1="397.9" x2="904.8" y2="397.9" stroke="#c8ff00" stroke-width="2.2"/>
<line x1="833.8" y1="410.4" x2="904.8" y2="410.4" stroke="#c8ff00" stroke-width="2.6"/>
<line x1="776.8" y1="312.9" x2="876.8" y2="312.9" stroke="#c8ff00" stroke-width="2.5"/>
<line x1="884.8" y1="312.9" x2="984.8" y2="312.9" stroke="#c8ff00" stroke-width="2.5"/>
<line x1="732.1" y1="402.3" x2="818.7" y2="352.3" stroke="#c8ff00" stroke-width="1.8"/>
<line x1="761.4" y1="413.0" x2="834.1" y2="371.0" stroke="#c8ff00" stroke-width="2.3"/>
<line x1="767.1" y1="423.0" x2="839.9" y2="381.0" stroke="#c8ff00" stroke-width="2.3"/>
<line x1="766.0" y1="441.0" x2="826.6" y2="406.0" stroke="#c8ff00" stroke-width="2.2"/>
<line x1="771.3" y1="452.3" x2="832.8" y2="416.8" stroke="#c8ff00" stroke-width="2.6"/>
<line x1="680.2" y1="392.4" x2="794.5" y2="326.4" stroke="#c8ff00" stroke-width="2.5"/>
<line x1="679.2" y1="496.1" x2="729.2" y2="409.5" stroke="#c8ff00" stroke-width="1.8"/>
<line x1="709.9" y1="490.8" x2="751.9" y2="418.1" stroke="#c8ff00" stroke-width="2.3"/>
<line x1="719.9" y1="496.6" x2="761.9" y2="423.8" stroke="#c8ff00" stroke-width="2.3"/>
<line x1="727.9" y1="512.7" x2="762.9" y2="452.1" stroke="#c8ff00" stroke-width="2.2"/>
<line x1="738.2" y1="519.9" x2="773.7" y2="458.4" stroke="#c8ff00" stroke-width="2.6"/>
<line x1="628.8" y1="514.4" x2="695.3" y2="399.2" stroke="#c8ff00" stroke-width="2.5"/>
<line x1="680.3" y1="603.9" x2="680.3" y2="503.9" stroke="#c8ff00" stroke-width="1.8"/>
<line x1="704.3" y1="583.9" x2="704.3" y2="499.9" stroke="#c8ff00" stroke-width="2.3"/>
<line x1="715.8" y1="583.9" x2="715.8" y2="499.9" stroke="#c8ff00" stroke-width="2.3"/>
<line x1="730.8" y1="593.9" x2="730.8" y2="523.9" stroke="#c8ff00" stroke-width="2.2"/>
<line x1="743.3" y1="594.9" x2="743.3" y2="523.9" stroke="#c8ff00" stroke-width="2.6"/>
<line x1="645.8" y1="644.9" x2="645.8" y2="511.3" stroke="#c8ff00" stroke-width="2.5"/>
<line x1="735.2" y1="696.6" x2="685.2" y2="610.0" stroke="#c8ff00" stroke-width="1.8"/>
<line x1="745.9" y1="667.3" x2="703.9" y2="594.6" stroke="#c8ff00" stroke-width="2.3"/>
<line x1="755.9" y1="661.6" x2="713.9" y2="588.8" stroke="#c8ff00" stroke-width="2.3"/>
<line x1="773.9" y1="662.7" x2="738.9" y2="602.1" stroke="#c8ff00" stroke-width="2.2"/>
<line x1="785.2" y1="657.4" x2="749.7" y2="595.9" stroke="#c8ff00" stroke-width="2.6"/>
<line x1="717.3" y1="734.7" x2="659.5" y2="634.6" stroke="#c8ff00" stroke-width="2.5"/>
<line x1="829.0" y1="749.5" x2="742.4" y2="699.5" stroke="#c8ff00" stroke-width="1.8"/>
<line x1="823.7" y1="718.8" x2="751.0" y2="676.8" stroke="#c8ff00" stroke-width="2.3"/>
<line x1="829.5" y1="708.8" x2="756.7" y2="666.8" stroke="#c8ff00" stroke-width="2.3"/>
<line x1="845.6" y1="700.8" x2="785.0" y2="665.8" stroke="#c8ff00" stroke-width="2.2"/>
<line x1="852.8" y1="690.5" x2="791.3" y2="655.0" stroke="#c8ff00" stroke-width="2.6"/>
<line x1="793.6" y1="768.9" x2="736.5" y2="735.9" stroke="#c8ff00" stroke-width="2.5"/>
<line x1="936.8" y1="748.4" x2="836.8" y2="748.4" stroke="#c8ff00" stroke-width="1.8"/>
<line x1="916.8" y1="724.4" x2="832.8" y2="724.4" stroke="#c8ff00" stroke-width="2.3"/>
<line x1="916.8" y1="712.9" x2="832.8" y2="712.9" stroke="#c8ff00" stroke-width="2.3"/>
<line x1="926.8" y1="697.9" x2="856.8" y2="697.9" stroke="#c8ff00" stroke-width="2.2"/>
<line x1="927.8" y1="685.4" x2="856.8" y2="685.4" stroke="#c8ff00" stroke-width="2.6"/>
<line x1="966.8" y1="782.9" x2="883.8" y2="782.9" stroke="#c8ff00" stroke-width="2.5"/>
<line x1="877.8" y1="782.9" x2="794.8" y2="782.9" stroke="#c8ff00" stroke-width="2.5"/>
<line x1="1029.5" y1="693.5" x2="942.9" y2="743.5" stroke="#c8ff00" stroke-width="1.8"/>
<line x1="1000.2" y1="682.8" x2="927.5" y2="724.8" stroke="#c8ff00" stroke-width="2.3"/>
<line x1="994.5" y1="672.8" x2="921.7" y2="714.8" stroke="#c8ff00" stroke-width="2.3"/>
<line x1="995.6" y1="654.8" x2="935.0" y2="689.8" stroke="#c8ff00" stroke-width="2.2"/>
<line x1="990.3" y1="643.5" x2="928.8" y2="679.0" stroke="#c8ff00" stroke-width="2.6"/>
<line x1="1025.1" y1="735.9" x2="968.9" y2="768.4" stroke="#c8ff00" stroke-width="2.5"/>
<line x1="1082.4" y1="599.7" x2="1032.4" y2="686.3" stroke="#c8ff00" stroke-width="1.8"/>
<line x1="1051.7" y1="605.0" x2="1009.7" y2="677.7" stroke="#c8ff00" stroke-width="2.3"/>
<line x1="1041.7" y1="599.2" x2="999.7" y2="672.0" stroke="#c8ff00" stroke-width="2.3"/>
<line x1="1033.7" y1="583.1" x2="998.7" y2="643.7" stroke="#c8ff00" stroke-width="2.2"/>
<line x1="1023.4" y1="575.9" x2="987.9" y2="637.4" stroke="#c8ff00" stroke-width="2.6"/>
<line x1="1102.6" y1="633.8" x2="1044.3" y2="734.7" stroke="#c8ff00" stroke-width="2.5"/>
<circle cx="880.8" cy="547.9" r="48.4" fill="none" stroke="#00e6e6" stroke-width="4.2"/>
<circle cx="880.8" cy="547.9" r="43" fill="none" stroke="#00e6e6" stroke-width="1.8"/>
<path d="M880.8,550.2 C879.0,552.5 874.0,559.1 870.1,564.1 C866.2,569.1 862.4,574.7 857.4,580.0 C852.4,585.3 846.7,591.4 840.3,596.0 C833.9,600.6 826.1,604.9 819.0,607.7 C811.9,610.5 804.8,611.8 797.7,613.0 C790.6,614.2 782.7,614.8 776.5,615.2 C770.3,615.6 763.2,615.5 760.5,615.6" fill="none" stroke="#f5103c" stroke-width="2.1"/>
<path d="M880.8,550.2 C881.1,553.9 881.5,564.2 882.9,572.6 C884.3,581.0 886.4,592.1 889.3,600.3 C892.1,608.4 895.4,614.0 900.0,621.5 C904.6,629.0 912.0,638.6 917.0,645.0 C922.0,651.4 926.0,655.3 929.7,659.9 C933.4,664.5 937.7,670.5 939.3,672.6" fill="none" stroke="#f5103c" stroke-width="2.1"/>
<path d="M760.5,615.6 C756.1,616.1 742.6,616.9 733.9,618.4 C725.2,619.9 716.3,622.2 708.3,624.7 C700.3,627.2 689.7,632.2 686.0,633.7" fill="none" stroke="#f5103c" stroke-width="2.9"/>
<path d="M939.3,672.6 C943.4,677.9 955.4,693.1 963.8,704.6 C972.1,716.1 985.1,735.6 989.4,741.8" fill="none" stroke="#f5103c" stroke-width="2.9"/>
<rect x="757" y="612" width="7" height="7" fill="#f5103c"/>
<rect x="935.8" y="669.1" width="7" height="7" fill="#f5103c"/>
<rect x="683" y="630.7" width="6" height="6" fill="none" stroke="#f5103c" stroke-width="1.8"/>
<rect x="986.4" y="738.8" width="6" height="6" fill="none" stroke="#f5103c" stroke-width="1.8"/>
<path d="M1318.5,852 V823" stroke="#00e000" stroke-width="5"/>
<path d="M1309.5,824.5 L1318.5,807.5 L1327.5,824.5 Z" fill="#00e000"/>
<path d="M1326,860 H1355" stroke="#f00000" stroke-width="5"/>
<path d="M1354,851.5 L1371,860 L1354,869 Z" fill="#f00000"/>
<circle cx="1318" cy="860.5" r="8.8" fill="#0000a0"/>
<text x="1317.5" y="808" font-family="Liberation Sans" font-weight="bold" font-size="13" fill="#e6e600">y</text>
<text x="1317.5" y="861" font-family="Liberation Sans" font-weight="bold" font-size="12" fill="#e6e600">z</text>
<text x="1372.5" y="861" font-family="Liberation Sans" font-weight="bold" font-size="13" fill="#e6e600">x</text>

</svg>
<div class="a" style="left:0;top:1042px;width:1920px;height:38px;background:#0b2a6e"></div>
<div class="a" style="left:95px;top:1042px;width:200px;height:38px;background:#1b4aa2"></div>
<div class="a" style="left:95px;top:1077px;width:200px;height:3px;background:#a9c8f4"></div>
<svg class="a" style="left:12px;top:1051px" width="21" height="20" viewBox="0 0 21 20"><path d="M0,2.8 L8.5,1.6 V9.4 H0 Z M9.7,1.4 L20.5,0 V9.4 H9.7 Z M0,10.6 H8.5 V18.4 L0,17.2 Z M9.7,10.6 H20.5 V20 L9.7,18.6 Z" fill="#fff"/></svg>
<svg class="a" style="left:61px;top:1052px" width="20" height="18" viewBox="0 0 20 18"><path d="M1,2 H7 L9,4 H19 V17 H1 Z" fill="#f8d775"/><path d="M1,6 H19 V17 H1 Z" fill="#ffe08a"/><path d="M5,11 H15 V17 H12.5 V13.5 H7.5 V17 H5 Z" fill="#2aa0e0"/></svg>
<svg class="a" style="left:106px;top:1052px" width="18" height="18" viewBox="0 0 18 18"><circle cx="9" cy="9" r="8.6" fill="#db4437"/><path d="M9,9 L1.6,13.3 A8.6,8.6 0 0 0 13.3,16.4 Z" fill="#0f9d58"/><path d="M9,9 L13.3,16.4 A8.6,8.6 0 0 0 17.6,9 Z" fill="#ffcd40"/><path d="M9,9 L17.6,9 A8.6,8.6 0 0 0 9,0.4 Z" fill="#db4437"/><circle cx="9" cy="9" r="4" fill="#fff"/><circle cx="9" cy="9" r="3.1" fill="#4285f4"/></svg>
<div class="a" style="left:129px;top:1050px;color:#fff;font-size:14.2px;line-height:22px;white-space:nowrap">CMS 3D Event Display...</div>
<svg class="a" style="left:308px;top:1051px" width="20" height="20" viewBox="0 0 20 20"><rect x="0.7" y="0.7" width="18.6" height="18.6" fill="none" stroke="#fff" stroke-width="1.4"/><path d="M1,11.5 L7,5 L11.5,11 L14,8 L19,13.5 V19 H1 Z" fill="#fff"/></svg>

<svg class="a" style="left:1598px;top:1051px" width="20" height="20" viewBox="0 0 20 20"><circle cx="9" cy="9" r="8.5" fill="#3a8ad0"/><path d="M1,9 H5 L7,4 L10,13 L12,7 L13.5,9 H17" fill="none" stroke="#fff" stroke-width="1.3"/><rect x="11" y="11" width="8" height="8" fill="#40a040"/><path d="M12.5,15 L14.5,17 L17.5,13" fill="none" stroke="#fff" stroke-width="1"/></svg>
<svg class="a" style="left:1628px;top:1051px" width="20" height="20" viewBox="0 0 20 20"><rect x="0.5" y="0.5" width="19" height="19" rx="2" fill="#e07020"/><path d="M5,14 H15 M6,16.5 H14 M9,4 Q12,6 9,8 Q6,10 9,12" fill="none" stroke="#fff" stroke-width="1.2"/></svg>
<svg class="a" style="left:1658px;top:1051px" width="20" height="20" viewBox="0 0 20 20"><path d="M9,0.5 L17,3 V9 Q17,16 9,19.5 Q1,16 1,9 V3 Z" fill="#fff" stroke="#222" stroke-width="1"/><path d="M9,1 V19 M1,9 H17" stroke="#222" stroke-width="1.2"/><path d="M1.5,3.5 L9,1 V9 H1.5 Z M9,9 H16.5 Q16,15 9,19 Z" fill="#222"/><circle cx="14.5" cy="15" r="4.5" fill="#1a8a3a"/><path d="M12.3,15 L14,16.7 L16.8,13.5" fill="none" stroke="#fff" stroke-width="1.1"/></svg>
<svg class="a" style="left:1688px;top:1051px" width="20" height="20" viewBox="0 0 20 20"><rect x="0" y="0" width="20" height="20" fill="#2a7ae8"/><path d="M3,7 L5,13 L7,7 L9,13 L11,7 L13,13 L15,7 L17,13" fill="none" stroke="#fff" stroke-width="1.4"/></svg>
<svg class="a" style="left:1718px;top:1051px" width="20" height="20" viewBox="0 0 20 20"><rect x="0.5" y="0.5" width="19" height="19" fill="#c8c8c8" stroke="#5a5a8a" stroke-width="1"/><rect x="1.5" y="1.5" width="17" height="12" fill="#d4d4d4"/><path d="M2,15.5 H18 M10,15 V19" stroke="#30309a" stroke-width="1.2"/></svg>
<svg class="a" style="left:1748px;top:1051px" width="20" height="20" viewBox="0 0 20 20"><path d="M1,8 L5,5 H19 V15 H1 Z" fill="#cfcfcf"/><path d="M5,12 L9,17 L19,6" fill="none" stroke="#40c040" stroke-width="2.6"/></svg>
<svg class="a" style="left:1778px;top:1053px" width="20" height="16" viewBox="0 0 20 16"><rect x="0.8" y="3.8" width="16.4" height="8.4" fill="none" stroke="#fff" stroke-width="1.6"/><rect x="2.5" y="5.5" width="13" height="5" fill="#fff"/><rect x="17.5" y="6" width="1.8" height="4" fill="#fff"/></svg>
<svg class="a" style="left:1810px;top:1052px" width="18" height="18" viewBox="0 0 18 18"><circle cx="13.5" cy="15" r="1.6" fill="#fff"/><path d="M8.5,15 A5,5 0 0 1 13.5,10 M4.5,15 A9,9 0 0 1 13.5,6 M0.8,15 A12.7,12.7 0 0 1 13.5,2.3" fill="none" stroke="#8a9ac0" stroke-width="1.1"/></svg>
<svg class="a" style="left:1838px;top:1053px" width="20" height="16" viewBox="0 0 20 16"><path d="M1,5 H4 L9,1 V15 L4,11 H1 Z" fill="none" stroke="#fff" stroke-width="1.1"/><path d="M12,5 L18,11 M18,5 L12,11" stroke="#fff" stroke-width="1.2"/></svg>
<div class="a" style="left:1871px;top:1050px;color:#fff;font-size:14.5px;line-height:22px">14:04</div>
<div class="a" style="left:1913px;top:1042px;width:1px;height:38px;background:#5a6a8a"></div>

</body></html>
